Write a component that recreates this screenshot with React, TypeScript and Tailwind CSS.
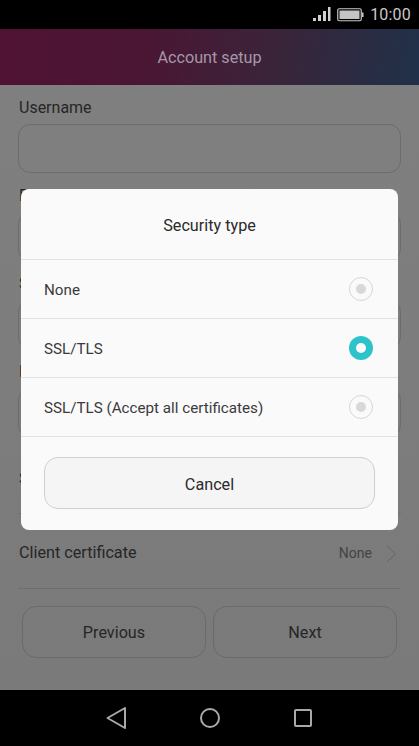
import React from "react";

function Field({ label }: { label: string }) {
  return (
    <div className="pt-[12px]">
      <div className="pl-[1px] text-[16px] leading-[22px] text-[#262626]">{label}</div>
      <div className="mt-[5px] h-[49px] rounded-[12px] border border-[#6c6c6c]" />
    </div>
  );
}

function Radio({ active }: { active?: boolean }) {
  return active ? (
    <div className="flex h-[24px] w-[24px] items-center justify-center rounded-full bg-[#2cc3cb]">
      <div className="h-[10px] w-[10px] rounded-full bg-[#fafafa]" />
    </div>
  ) : (
    <div className="flex h-[24px] w-[24px] items-center justify-center rounded-full border border-[#d6d6d6]">
      <div className="h-[10px] w-[10px] rounded-full bg-[#d8d8d8]" />
    </div>
  );
}

function Option({ label, active }: { label: string; active?: boolean }) {
  return (
    <div className="flex h-[59px] items-center justify-between border-t border-[#e2e2e2] pl-[23px] pr-[25px]">
      <span className="pt-[3px] text-[15.2px] text-[#3a3a3a]">{label}</span>
      <Radio active={active} />
    </div>
  );
}

function Chevron() {
  return (
    <svg width="11" height="18" viewBox="0 0 11 18" fill="none" className="ml-[14px]">
      <path d="M1 1l8.5 8L1 17" stroke="#666666" strokeWidth="1" />
    </svg>
  );
}

export default function App() {
  return (
    <div
      className="flex h-[746px] w-[419px] flex-col overflow-hidden bg-black"
      style={{ fontFamily: "Roboto, sans-serif" }}
    >
      <div className="flex h-[29px] items-center justify-end pr-[8px] text-[#c9c9c9]">
        <svg width="19" height="15" viewBox="0 0 19 15" fill="#d0d0d0" className="mr-[6px]">
          <rect x="1" y="11" width="3" height="3" />
          <rect x="6" y="8" width="3" height="6" />
          <rect x="11" y="4" width="3" height="10" />
          <rect x="16" y="0" width="2.5" height="14" />
        </svg>
        <svg width="27" height="14" viewBox="0 0 27 14" fill="none" className="mr-[6px]">
          <rect x="0.75" y="0.75" width="23.5" height="12" rx="1.5" stroke="#c9c9c9" strokeWidth="1.2" />
          <rect x="2.5" y="2.5" width="20" height="8.5" fill="#c4c4c4" />
          <rect x="25" y="4.5" width="1.5" height="4.5" fill="#c9c9c9" />
        </svg>
        <span className="text-[16px] leading-none tracking-[0.2px]">10:00</span>
      </div>

      <div className="relative flex-1">
        <div className="flex h-full flex-col bg-gradient-to-b from-[#808080] to-[#7a7a7a]">
          <div className="flex h-[56px] items-center justify-center bg-[linear-gradient(100deg,#501232_0%,#4a1634_35%,#3a2439_65%,#1f3149_100%)] pt-[2px] text-[16.2px] text-[#a797a6]">
            Account setup
          </div>
          <div className="px-[18px]">
            <Field label="Username" />
            <Field label="Password" />
            <Field label="Server address" />
            <Field label="Port" />
            <div className="flex h-[77px] items-center border-b border-[#6e6e6e] pl-[1px] pt-[7px] text-[16px] text-[#262626]">
              Security type
            </div>
            <div className="flex h-[75px] items-center justify-between border-b border-[#6e6e6e] pl-[1px] pt-[5px] text-[16.2px] text-[#262626]">
              <span>Client certificate</span>
              <span className="flex items-center pr-[4px] text-[14px] text-[#444444]">
                None
                <Chevron />
              </span>
            </div>
            <div className="flex gap-[7px] px-[4px] pt-[17px]">
              <div className="flex h-[52px] flex-1 items-center justify-center rounded-[14px] border border-[#6a6a6a] pt-[3px] text-[16.2px] text-[#262626]">
                Previous
              </div>
              <div className="flex h-[52px] flex-1 items-center justify-center rounded-[14px] border border-[#6a6a6a] pt-[3px] text-[16.2px] text-[#262626]">
                Next
              </div>
            </div>
          </div>
        </div>

        <div className="absolute inset-0 flex items-center justify-center">
          <div className="w-[377px] rounded-[8px] bg-[#fafafa]">
            <div className="flex h-[70px] items-center justify-center pt-[4px] text-[16.2px] text-[#2a2a2a]">
              Security type
            </div>
            <Option label="None" />
            <Option label="SSL/TLS" active />
            <Option label="SSL/TLS (Accept all certificates)" />
            <div className="border-t border-[#e2e2e2] px-[23px] pb-[21px] pt-[20px]">
              <div className="flex h-[52px] items-center justify-center rounded-[14px] border border-[#cfcfcf] bg-[#f5f5f5] pt-[4px] text-[16.2px] text-[#2a2a2a]">
                Cancel
              </div>
            </div>
          </div>
        </div>
      </div>

      <div className="flex h-[56px] items-center justify-center">
        <svg width="20" height="24" viewBox="0 0 20 24" fill="none" className="mr-[73px]">
          <path d="M19 2L1.5 12L19 22z" stroke="#a9a9a9" strokeWidth="2" strokeLinejoin="round" />
        </svg>
        <svg width="22" height="22" viewBox="0 0 22 22" fill="none" className="mr-[72px]">
          <circle cx="11" cy="11" r="9" stroke="#a9a9a9" strokeWidth="2" />
        </svg>
        <svg width="20" height="20" viewBox="0 0 20 20" fill="none">
          <rect x="2" y="2" width="16" height="16" rx="1" stroke="#a9a9a9" strokeWidth="2" />
        </svg>
      </div>
    </div>
  );
}
